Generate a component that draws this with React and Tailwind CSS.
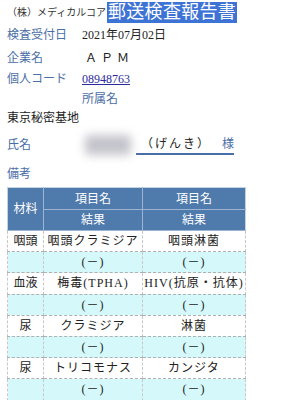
import React from "react";

const F = { fontFamily: '"Liberation Serif", "Noto Sans CJK JP", serif' };

const rows = [
  ["咽頭", "咽頭クラミジア", "咽頭淋菌"],
  ["", "(－)", "(－)", true],
  ["血液", "梅毒(TPHA)", "HIV(抗原・抗体)"],
  ["", "(－)", "(－)", true],
  ["尿", "クラミジア", "淋菌"],
  ["", "(－)", "(－)", true],
  ["尿", "トリコモナス", "カンジタ"],
  ["", "(－)", "(－)", true],
];

export default function App() {
  return (
    <div className="w-[285px] h-[400px] overflow-hidden bg-white text-[12px] text-[#222]" style={F}>
      <div className="flex items-center h-[24px] pt-[1px] pl-[7px]">
        <span className="text-[10px] text-[#333] w-[100px]">（株）メディカルコア</span>
        <span className="bg-[#3e73d6] text-white text-[18px] leading-[21px] px-[1px] tracking-[0.3px]">郵送検査報告書</span>
      </div>
      <div className="flex items-center h-[21px] pl-[7px]">
        <span className="w-[75px] text-[#4a6ea8]">検査受付日</span>
        <span>2021年07月02日</span>
      </div>
      <div className="flex items-center h-[22px] pt-[3px] pl-[7px]">
        <span className="w-[78px] text-[#4a6ea8]">企業名</span>
        <span className="tracking-[4px]">ＡＰＭ</span>
      </div>
      <div className="flex items-center h-[21px] pt-[3px] pl-[7px]">
        <span className="w-[75px] text-[#4a6ea8]">個人コード</span>
        <span className="text-[#2c2aa0] underline">08948763</span>
      </div>
      <div className="flex items-center h-[20px] pt-[2px] pl-[82px] text-[#4a6ea8]">所属名</div>
      <div className="flex items-center h-[19px] pl-[7px]">東京秘密基地</div>
      <div className="flex items-center h-[30px] mt-[3px] pl-[7px]">
        <span className="w-[78px] text-[#4a6ea8]">氏名</span>
        <span className="w-[46px] h-[20px] bg-[#c4c4cc] blur-[5px] rounded-sm"></span>
        <span className="ml-[5px] w-[98px] flex items-center justify-between border-b-2 border-[#4a6ea8] h-[20px] pl-[5px]">
          <span className="tracking-[2px]">（げんき）</span>
          <span className="text-[#4a6ea8]">様</span>
        </span>
      </div>
      <div className="flex items-center h-[24px] mt-[2px] pl-[7px] text-[#4a6ea8]">備考</div>
      <div className="pl-[7px] mt-[1px]">
        <table className="border-collapse w-[238px] table-fixed text-center">
          <colgroup>
            <col className="w-[36px]" />
            <col className="w-[99px]" />
            <col className="w-[103px]" />
          </colgroup>
          <thead>
            <tr className="h-[22px] bg-[#4f7aac] text-white">
              <th rowSpan={2} className="font-normal border border-[#9db5d3] border-t-[#c5d2e2] border-l-[#c5d2e2]">材料</th>
              <th className="font-normal border border-[#9db5d3] border-t-[#c5d2e2]">項目名</th>
              <th className="font-normal border border-[#9db5d3] border-t-[#c5d2e2] border-r-[#c5d2e2]">項目名</th>
            </tr>
            <tr className="h-[21px] bg-[#4f7aac] text-white">
              <th className="font-normal border border-[#9db5d3]">結果</th>
              <th className="font-normal border border-[#9db5d3] border-r-[#c5d2e2]">結果</th>
            </tr>
          </thead>
          <tbody>
            {rows.map((r, i) => (
              <tr key={i} className={"h-[21.2px] " + (r[3] ? "bg-[#d5f8fa]" : "bg-white")}>
                <td className="border-x border-x-[#c8c8c8] border-b border-b-[#b0b0b0] border-dashed p-0">{r[0]}</td>
                <td className="border-x border-x-[#c8c8c8] border-b border-b-[#b0b0b0] border-dashed p-0 tracking-[1px]">{r[1]}</td>
                <td className="border-x border-x-[#c8c8c8] border-b border-b-[#b0b0b0] border-dashed p-0 tracking-[1px]">{r[2]}</td>
              </tr>
            ))}
          </tbody>
        </table>
      </div>
    </div>
  );
}
